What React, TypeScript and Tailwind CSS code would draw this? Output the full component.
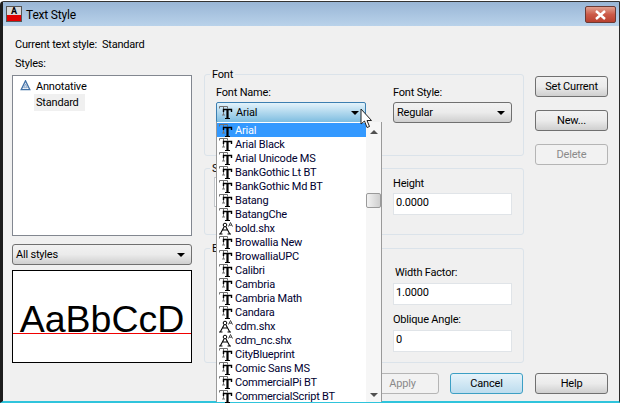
import type { ReactNode } from "react";

const fonts = [
  { name: "Arial" },
  { name: "Arial Black" },
  { name: "Arial Unicode MS" },
  { name: "BankGothic Lt BT" },
  { name: "BankGothic Md BT" },
  { name: "Batang" },
  { name: "BatangChe" },
  { name: "bold.shx", shx: true },
  { name: "Browallia New" },
  { name: "BrowalliaUPC" },
  { name: "Calibri" },
  { name: "Cambria" },
  { name: "Cambria Math" },
  { name: "Candara" },
  { name: "cdm.shx", shx: true },
  { name: "cdm_nc.shx", shx: true },
  { name: "CityBlueprint" },
  { name: "Comic Sans MS" },
  { name: "CommercialPi BT" },
  { name: "CommercialScript BT" },
];

// TrueType icon: grey T behind a black bold T
const TrueTypeIcon = () => (
  <svg width="14" height="13" viewBox="0 0 14 13" className="shrink-0">
    <path d="M0.5 2.5V0.5H8.5V2.5M4.5 0.5V9M3 9H6" fill="none" stroke="#707070" strokeWidth="1" />
    <path d="M4.5 6V3.5H12.5V6" fill="none" stroke="#000" strokeWidth="1.4" />
    <path d="M8.5 3.5V12" fill="none" stroke="#000" strokeWidth="2.2" />
    <path d="M6 12.5H11" fill="none" stroke="#000" strokeWidth="1" />
  </svg>
);

// SHX icon: little compass with an A
const ShxIcon = () => (
  <svg width="14" height="13" viewBox="0 0 14 13" className="shrink-0">
    <circle cx="6" cy="3" r="1.8" fill="none" stroke="#000" strokeWidth="1" />
    <path d="M5 5L1.5 11.5M7 5L10.5 11.5M0 12H3.5M8.5 12H12M3.5 8H8.5" fill="none" stroke="#000" strokeWidth="1.1" />
    <path d="M9.5 4.5L11.5 0.5L13.5 4.5M10.3 3.2H12.7" fill="none" stroke="#333" strokeWidth="0.9" />
  </svg>
);

const AnnotativeIcon = () => (
  <svg width="11" height="11" viewBox="0 0 11 11" className="shrink-0">
    <path d="M5.5 0.8L9.8 9.6H1.2Z" fill="none" stroke="#3f6fa5" strokeWidth="1.3" />
    <path d="M5.5 3.8L7.4 7.8H3.6Z" fill="#cfdcec" stroke="#6b8fba" strokeWidth="0.7" />
  </svg>
);

const Caret = () => (
  <svg width="8" height="4" viewBox="0 0 8 4" className="shrink-0">
    <path d="M0 0H8L4 4Z" fill="#000" />
  </svg>
);

const Btn = ({ label, variant = "normal", className = "" }: { label: string; variant?: "normal" | "default" | "off"; className?: string }) => {
  const look =
    variant === "default"
      ? "border-[#3c9fc4] bg-gradient-to-b from-[#e6f3fa] to-[#bcdcee] text-black"
      : variant === "off"
      ? "border-[#b5b5b5] bg-[#f2f2f2] text-[#8a8a8a]"
      : "border-[#707070] bg-gradient-to-b from-[#f2f2f2] via-[#ebebeb] to-[#cfcfcf] text-black";
  return (
    <div className={`h-[21px] w-[73px] flex items-center justify-center rounded-[3px] border ${look} ${className}`}>
      {label}
    </div>
  );
};

const Select = ({ label, className = "" }: { label: string; className?: string }) => (
  <div className={`h-[21px] flex items-center justify-between pl-[3px] pr-[6px] rounded-[3px] border border-[#707070] bg-gradient-to-b from-[#f2f2f2] via-[#ebebeb] to-[#cfcfcf] ${className}`}>
    <span>{label}</span>
    <Caret />
  </div>
);

const Field = ({ value, className = "" }: { value: string; className?: string }) => (
  <div className={`h-[22px] w-[119px] flex items-center pl-[2px] pb-[2px] bg-white border border-[#e0e4e8] ${className}`}>
    {value}
  </div>
);

const Group = ({ title, className = "", children }: { title?: string; className?: string; children: ReactNode }) => (
  <div className={`relative w-[320px] rounded-[3px] border border-[#dbe3ea] ${className}`}>
    {title && <span className="absolute -top-[7px] left-[5px] bg-[#f0f0f0] px-[2px] leading-[13px]">{title}</span>}
    {children}
  </div>
);

export default function App() {
  return (
    <div className="relative w-[620px] h-[403px] overflow-hidden bg-white text-[11px] leading-[14px] tracking-[-0.2px] text-black font-['Roboto','Liberation_Sans',sans-serif]">
      <div className="w-[620px] h-[402px] mt-[1px] flex flex-col border-l-[3px] border-r border-t border-b-2 border-l-[#1c1c1c] border-r-[#2a2a2a] border-t-[#333] border-b-[#2fc4dc] rounded-tl-[4px] bg-[#f0f0f0]">
        {/* Title bar */}
        <div className="h-[24px] shrink-0 flex items-center justify-between pl-[3px] pr-[3px] bg-gradient-to-b from-[#99b6d6] to-[#b9d2ea]">
          <div className="flex items-center gap-[4px]">
            <div className="w-[16px] h-[16px] flex flex-col border border-[#555]">
              <div className="h-[8px] bg-[#d8d8d8] text-[9px] leading-[8px] font-bold text-center">A</div>
              <div className="flex-1 bg-[#e00000]" />
            </div>
            <span className="text-[12px] mt-[2px]">Text Style</span>
          </div>
          <div className="w-[31px] h-[17px] self-start mt-[4px] flex items-center justify-center rounded-[2px] border border-[#6b3a34] bg-gradient-to-b from-[#e0a090] via-[#cc5a48] to-[#b8402f]">
            <svg width="13" height="10" viewBox="0 0 13 10">
              <path d="M2 1L11 9M11 1L2 9" stroke="#fff" strokeWidth="2.4" fill="none" />
            </svg>
          </div>
        </div>

        {/* Dialog body */}
        <div className="flex-1 flex pl-[9px]">
          {/* Left column */}
          <div className="w-[180px] shrink-0 flex flex-col">
            <div className="pl-[3px] mt-[12px]">Current text style:&nbsp; Standard</div>
            <div className="pl-[3px] mt-[5px]">Styles:</div>
            <div className="mt-[4px] h-[161px] bg-white border border-[#828790] pl-[7px] pt-[1px]">
              <div className="flex items-center gap-[5px] h-[17px]">
                <AnnotativeIcon />
                <span className="mt-[2px]">Annotative</span>
              </div>
              <div className="ml-[14px] w-[51px] h-[17px] pl-[2px] flex items-center bg-[#f0f0f0]">Standard</div>
            </div>
            <Select label="All styles" className="mt-[8px]" />
            <div className="mt-[5px] h-[93px] bg-white border border-black">
              <div className="h-[62px] flex items-end justify-center">
                <span className="text-[37.5px] leading-[28px] tracking-normal font-['Liberation_Sans',Arial,sans-serif]">AaBbCcD</span>
              </div>
              <div className="relative h-px bg-[#f00000]" />
            </div>
          </div>

          {/* Middle column */}
          <div className="ml-[12px] w-[320px] shrink-0 flex flex-col">
            <Group title="Font" className="mt-[48px] h-[82px] flex pl-[11px]">
              <div className="w-[177px] pt-[11px]">
                <div>Font Name:</div>
                <div className="mt-[2px] h-[21px] w-[150px] border border-[#3c7fb1] rounded-[2px] bg-gradient-to-b from-[#e3f3fb] to-[#7dbde0] flex items-center justify-between pl-[2px] pr-[6px]">
                  <div className="flex items-center gap-[3px]">
                    <TrueTypeIcon />
                    <span>Arial</span>
                  </div>
                  <Caret />
                </div>
              </div>
              <div className="pt-[11px]">
                <div>Font Style:</div>
                <Select label="Regular" className="mt-[2px] w-[119px]" />
              </div>
            </Group>

            <Group title="Size" className="mt-[12px] h-[67px] flex pl-[9px]">
              <div className="mt-[8px] w-[179px] h-[30px] shrink-0">
                <div className="w-[120px] h-[30px] border border-[#c4c8cc] bg-white" />
              </div>
              <div className="pt-[8px]">
                <div>Height</div>
                <Field value="0.0000" className="mt-[2px]" />
              </div>
            </Group>

            <Group title="Effects" className="mt-[13px] h-[115px] pl-[188px] pt-[17px]">
              <div className="pl-[2px]">Width Factor:</div>
              <Field value="1.0000" className="mt-[3px]" />
              <div className="mt-[8px]">Oblique Angle:</div>
              <Field value="0" className="mt-[3px]" />
            </Group>

            <div className="mt-[10px] flex justify-end gap-[11px] pr-[1px]">
              <Btn label="Apply" variant="off" className="w-[68px]" />
              <Btn label="Cancel" variant="default" />
            </div>
          </div>

          {/* Right column */}
          <div className="ml-[11px] w-[73px] shrink-0 flex flex-col">
            <Btn label="Set Current" className="mt-[50px]" />
            <Btn label="New..." className="mt-[13px]" />
            <Btn label="Delete" variant="off" className="mt-[13px]" />
            <Btn label="Help" className="mt-[208px]" />
          </div>
        </div>
      </div>

      {/* Open font list */}
      <div className="absolute left-[216px] top-[122px] w-[166px] h-[280px] flex bg-white border-l border-r border-[#9a9a9a]">
        <div className="w-[149px] shrink-0 pt-[1px]">
          {fonts.map((f, i) => (
            <div
              key={f.name}
              className={`h-[14px] flex items-center gap-[2px] pl-[2px] ${i === 0 ? "bg-[#3399ff] text-white" : "text-[#000030]"}`}
            >
              {f.shx ? <ShxIcon /> : <TrueTypeIcon />}
              <span className="mt-[2px]">{f.name}</span>
            </div>
          ))}
        </div>
        <div className="flex-1 flex flex-col items-center bg-[#f6f6f6]">
          <div className="mt-[8px] w-0 h-0 border-x-[4px] border-x-transparent border-b-[4px] border-b-[#505050]" />
          <div className="mt-[59px] w-[15px] h-[15px] rounded-[2px] border border-[#9a9a9a] bg-gradient-to-r from-[#f2f2f2] to-[#cfcfcf]" />
          <div className="mt-auto mb-[5px] w-0 h-0 border-x-[4px] border-x-transparent border-t-[4px] border-t-[#505050]" />
        </div>
      </div>

      {/* Mouse cursor */}
      <svg width="14" height="22" viewBox="0 0 14 22" className="absolute left-[360px] top-[108px]">
        <path d="M1 1V16L4.5 13L7 19.5L9.5 18.5L7 12.5H11.5Z" fill="#fff" stroke="#222" strokeWidth="1" />
      </svg>
    </div>
  );
}
